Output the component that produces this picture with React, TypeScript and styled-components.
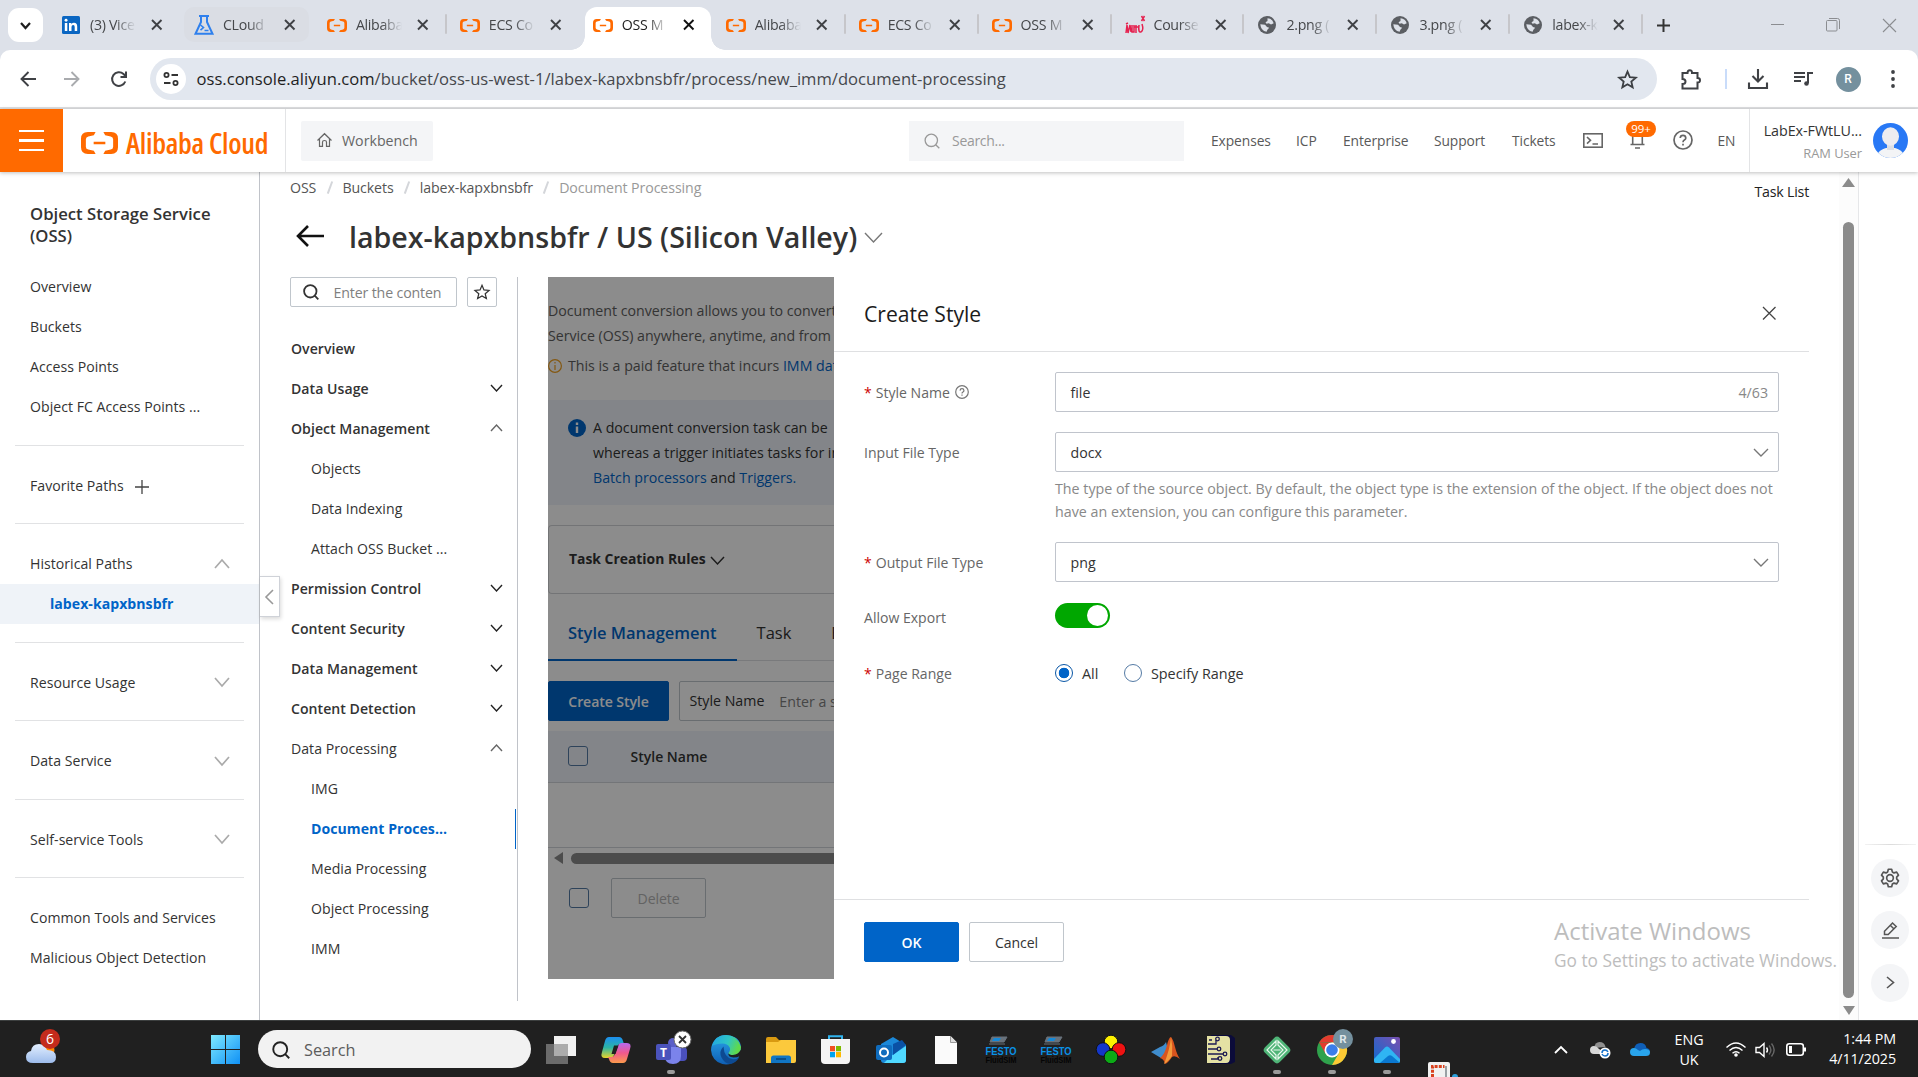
import React from 'react';
import styled, { createGlobalStyle, css } from 'styled-components';

const Global = createGlobalStyle`
  * { box-sizing: border-box; }
  html, body { margin: 0; padding: 0; overflow: hidden; background: #fff; }
  body { font-family: 'Open Sans', 'Noto Sans', sans-serif; font-size: 14.2px; color: #333; }
  svg { display: block; flex: none; overflow: visible; }
`;

const Screen = styled.div`
  position: relative;
  width: 1918px;
  height: 1077px;
  display: flex;
  flex-direction: column;
  overflow: hidden;
`;

/* ---------- browser tabs ---------- */
const TabStrip = styled.div`
  display: flex;
  height: 50px;
  flex: none;
  background: #dde1e9;
`;
const TabSearch = styled.div`
  width: 35px;
  height: 34px;
  margin: 8px 4px 0 8px;
  border-radius: 11px;
  background: #fff;
  display: flex;
  align-items: center;
  justify-content: center;
`;
const TabItem = styled.div<{ $active?: boolean; $hover?: boolean; $sep?: boolean }>`
  position: relative;
  width: 132.95px;
  height: 50px;
  padding: 0 7px 0 14px;
  display: flex;
  align-items: center;
  ${(p) => p.$sep && css`
    &::after { content: ''; position: absolute; right: -1px; top: 14px; width: 2px; height: 20px; background: #c6c6ca; border-radius: 1px; }
  `}
  ${(p) => p.$hover && css`
    &::before { content: ''; position: absolute; left: 4px; right: 4px; top: 7px; height: 35px; border-radius: 10px; background: #dadde4; z-index: 0; }
  `}
  ${(p) => p.$active && css`
    &::before { content: ''; position: absolute; left: 6px; right: 1px; top: 7px; bottom: 0; border-radius: 12px 12px 0 0; background: #fff; }
  `}
`;
const Flare = styled.span<{ $right?: boolean }>`
  position: absolute;
  bottom: 0;
  width: 14px;
  height: 14px;
  ${(p) => (p.$right ? 'right: -13px;' : 'left: -8px;')}
  background: radial-gradient(circle at ${(p) => (p.$right ? '100%' : '0')} 0, transparent 13.5px, #fff 14px);
`;
const TabIcon = styled.span`
  position: relative;
  width: 20px;
  margin-right: 9px;
  display: flex;
  justify-content: center;
`;
const TabTitle = styled.span<{ $active?: boolean }>`
  position: relative;
  width: 46px;
  overflow: hidden;
  white-space: nowrap;
  font-size: 14.2px;
  line-height: 24px;
  letter-spacing: -0.3px;
  color: ${(p) => (p.$active ? '#1f1f1f' : '#45474a')};
  mask-image: linear-gradient(90deg, #000 55%, transparent 100%);
`;
const TabClose = styled.span`
  position: relative;
  margin-left: 16px;
`;
const NewTab = styled.div`
  width: 42px;
  display: flex;
  align-items: center;
  justify-content: center;
`;
const WindowButtons = styled.div`
  margin-left: auto;
  display: flex;
  align-items: center;
  & > span { width: 57px; display: flex; justify-content: center; }
  & > span:first-child { margin-right: -1px; padding-left: 2px; }
`;

/* ---------- address bar ---------- */
const ToolbarBack = styled.div`
  background: #dde1e9;
  flex: none;
`;
const AddressRow = styled.div`
  height: 59px;
  display: flex;
  align-items: flex-start;
  padding-top: 8px;
  background: #fff;
  border-radius: 10px 10px 0 0;
  border-bottom: 2px solid #dedfe1;
`;
const BarButton = styled.div<{ $w: number }>`
  width: ${(p) => p.$w}px;
  height: 42px;
  display: flex;
  align-items: center;
  justify-content: center;
`;
const Omnibox = styled.div`
  width: 1507px;
  height: 42px;
  border-radius: 21px;
  background: #e2e7ef;
  display: flex;
  align-items: center;
  padding: 0 20px 0 6px;
`;
const SiteInfo = styled.span`
  width: 30px;
  height: 30px;
  border-radius: 50%;
  background: #fff;
  display: flex;
  align-items: center;
  justify-content: center;
  margin-right: 10.5px;
`;
const Url = styled.span`
  flex: 1;
  font-size: 16.6px;
  line-height: 26px;
  letter-spacing: 0.005px;
  color: #46484c;
  b { font-weight: 400; color: #1f1f1f; }
`;
const BarDivider = styled.i`
  width: 2px;
  height: 20px;
  margin-top: 11px;
  background: #c9dcfa;
`;
const ProfileDot = styled.span`
  width: 25px;
  height: 25px;
  border-radius: 50%;
  background: #74909e;
  color: #fff;
  font: 500 12px/25px Roboto, sans-serif;
  text-align: center;
`;

/* ---------- console header ---------- */
const Header = styled.header`
  position: relative;
  z-index: 3;
  height: 63px;
  flex: none;
  display: flex;
  align-items: center;
  background: #fff;
  box-shadow: 0 1px 4px rgba(0, 0, 0, 0.25);
`;
const Burger = styled.div`
  width: 63px;
  height: 63px;
  background: #ff6a00;
  display: flex;
  flex-direction: column;
  align-items: center;
  justify-content: center;
  gap: 7px;
  i { width: 25px; height: 2.5px; background: #fff; }
`;
const Brand = styled.div`
  width: 223px;
  height: 63px;
  border-right: 1px solid #e3e4e6;
  padding: 4px 0 0 18px;
  display: flex;
  align-items: center;
  gap: 8px;
  color: #ff6a00;
  font: 600 28.8px/40px 'Open Sans', sans-serif;
  font-stretch: 75%;
  letter-spacing: -0.25px;
  white-space: nowrap;
`;
const Workbench = styled.div`
  width: 132px;
  height: 40px;
  margin-left: 15px;
  padding: 0 0 1px 16px;
  display: flex;
  align-items: center;
  gap: 10px;
  border-radius: 2px;
  background: #f4f5f7;
  color: #666;
`;
const HeaderSearch = styled.div`
  width: 275px;
  height: 40px;
  margin-left: 476px;
  padding-left: 15px;
  display: flex;
  align-items: center;
  gap: 12px;
  background: #f4f5f7;
  color: #999;
  font-size: 14px;
  letter-spacing: -0.3px;
`;
const HeaderNav = styled.nav`
  display: flex;
  align-items: center;
  margin-left: 27px;
  color: #595959;
  font-size: 13.8px;
  letter-spacing: -0.08px;
`;
const NavCell = styled.span<{ $w: number }>`
  position: relative;
  width: ${(p) => p.$w}px;
  white-space: nowrap;
  padding-bottom: 1px;
`;
const CountBadge = styled.span`
  position: absolute;
  left: -4px;
  top: -10px;
  width: 30px;
  height: 16px;
  border-radius: 8px;
  background: #ff6a00;
  color: #fff;
  font-size: 11.5px;
  line-height: 16px;
  text-align: center;
`;
const Account = styled.div`
  height: 63px;
  flex: 1;
  border-left: 1px solid #e3e4e6;
  display: flex;
  align-items: center;
  justify-content: flex-end;
  padding-right: 10px;
  gap: 11px;
`;
const AccountText = styled.div`
  text-align: right;
  line-height: 23px;
  padding-top: 2px;
  font-size: 14.3px;
  letter-spacing: -0.05px;
  color: #333;
  small { display: block; font-size: 12.9px; color: #999; }
`;

/* ---------- console body ---------- */
const Body = styled.div`
  height: 848px;
  flex: none;
  display: flex;
`;
const Sidebar = styled.aside`
  width: 260px;
  padding-top: 31px;
  border-right: 1px solid #c0c3c9;
  font-size: 14.1px;
`;
const ServiceTitle = styled.h2`
  margin: 0 0 20.4px;
  padding-left: 30px;
  font-size: 16.7px;
  line-height: 22px;
  font-weight: 600;
`;
const SideItem = styled.div<{ $active?: boolean }>`
  height: 40px;
  padding: 0 30px 1px;
  display: flex;
  align-items: center;
  white-space: nowrap;
  letter-spacing: 0.03px;
  ${(p) => p.$active && css`
    padding-left: 50px;
    background: #eff3f8;
    color: #0064c8;
    font-weight: 700;
  `}
  svg { margin-left: auto; }
`;
const PlusMark = styled.span`
  margin: 3px 0 0 11px;
`;
const SideRule = styled.hr`
  width: 229px;
  height: 1px;
  margin: 17.5px 0 20px 15px;
  border: 0;
  background: #e1e2e4;
`;
const Main = styled.main`
  position: relative;
  width: 1579px;
  padding: 5px 0 0 30px;
`;
const CollapseHandle = styled.div`
  position: absolute;
  left: 0;
  top: 404px;
  width: 20px;
  height: 41px;
  display: flex;
  align-items: center;
  justify-content: center;
  background: #fff;
  border: 1px solid #cfd2d8;
  border-left: 0;
  box-shadow: 1px 2px 4px rgba(0, 0, 0, 0.15);
`;
const TopLine = styled.div`
  height: 20px;
  display: flex;
  align-items: center;
  padding-right: 30px;
  color: #555;
  white-space: nowrap;
`;
const Crumb = styled.span<{ $last?: boolean }>`
  color: ${(p) => (p.$last ? '#999' : '#555')};
  letter-spacing: -0.1px;
`;
const Slash = styled.i`
  width: 1.5px;
  height: 13px;
  margin: 0 12.3px;
  background: #d4d6da;
  transform: rotate(20deg);
`;
const TaskList = styled.span`
  margin: 8px 0 0 auto;
  color: #222;
  letter-spacing: -0.2px;
`;
const TitleRow = styled.div`
  height: 60px;
  margin-top: 10px;
  display: flex;
  align-items: center;
  padding-left: 6px;
  & > svg:first-child { margin-bottom: 2px; }
  h1 { margin: 0 8px 0 25px; font-size: 28.6px; line-height: 40px; font-weight: 600; color: #333; white-space: nowrap; }
`;
const Columns = styled.div`
  display: flex;
  margin-top: 10px;
`;
const BucketNav = styled.nav`
  width: 228px;
  height: 724px;
  border-right: 1px solid #c0c3c9;
`;
const FilterRow = styled.div`
  display: flex;
  gap: 10px;
  margin-bottom: 22px;
`;
const FilterInput = styled.div`
  width: 167px;
  height: 30px;
  padding: 0 15px 0 12px;
  display: flex;
  align-items: center;
  gap: 14.5px;
  border: 1px solid #c0c6cc;
  border-radius: 2px;
  color: #808080;
  letter-spacing: -0.15px;
  span { overflow: hidden; white-space: nowrap; }
`;
const StarButton = styled.div`
  width: 30px;
  height: 30px;
  display: flex;
  align-items: center;
  justify-content: center;
  border: 1px solid #c0c6cc;
  border-radius: 2px;
`;
const BucketItem = styled.div<{ $kind: string }>`
  height: 40px;
  padding: 0 15px 2px ${(p) => (p.$kind === 'child' || p.$kind === 'active' ? 21 : 1)}px;
  display: flex;
  align-items: center;
  white-space: nowrap;
  font-size: 14.1px;
  letter-spacing: 0.03px;
  font-weight: ${(p) => (p.$kind === 'group' ? 600 : p.$kind === 'active' ? 700 : 400)};
  ${(p) => p.$kind === 'active' && css`
    margin-right: 1px;
    border-right: 1px solid #0064c8;
    color: #0064c8;
  `}
  svg { margin-left: auto; }
`;

/* ---------- page below the mask ---------- */
const Masked = styled.section`
  position: relative;
  width: 286px;
  height: 702px;
  margin-left: 30px;
  padding-top: 21px;
  overflow: hidden;
  white-space: nowrap;
  color: #333;
  font-size: 14.2px;
  &::after { content: ''; position: absolute; inset: 0; background: rgba(0, 0, 0, 0.45); }
`;
const Intro = styled.p`
  margin: 0;
  line-height: 25px;
  letter-spacing: -0.02px;
  color: #606060;
`;
const Paid = styled.div`
  height: 30px;
  margin-top: 2px;
  display: flex;
  align-items: center;
  gap: 6px;
  color: #606060;
  svg { margin-top: 2px; }
`;
const Link = styled.span`
  color: #0064c8;
`;
const Notice = styled.div`
  height: 105px;
  margin-top: 20px;
  padding: 15px 0 0 20px;
  display: flex;
  gap: 7px;
  background: #eff3f9;
  line-height: 25px;
  svg { margin-top: 4px; }
`;
const Rules = styled.div`
  height: 69px;
  margin-top: 20px;
  padding: 0 0 2px 20px;
  display: flex;
  align-items: center;
  gap: 5px;
  border: 1px solid #d2d4d8;
  border-right: 0;
  border-radius: 4px 0 0 4px;
  font-weight: 700;
  font-size: 13.9px;
  svg { margin-top: 3px; }
`;
const PageTabs = styled.div`
  height: 56px;
  margin-top: 11px;
  display: flex;
  border-bottom: 1px solid #dcdee2;
  font-size: 16.5px;
  line-height: 56px;
`;
const PageTab = styled.div<{ $active?: boolean }>`
  height: 56px;
  padding: 0 20px;
  ${(p) => p.$active && css`
    width: 189px;
    border-bottom: 2px solid #0064c8;
    color: #0064c8;
    font-weight: 600;
  `}
`;
const Actions = styled.div`
  display: flex;
  gap: 10px;
  margin-top: 20px;
`;
const Button = styled.div<{ $primary?: boolean; $ghost?: boolean; $w: number }>`
  width: ${(p) => p.$w}px;
  height: 40px;
  flex: none;
  display: flex;
  align-items: center;
  justify-content: center;
  border-radius: 2px;
  border: 1px solid ${(p) => (p.$primary ? '#0064c8' : '#c0c6cc')};
  background: ${(p) => (p.$primary ? '#0064c8' : '#fff')};
  color: ${(p) => (p.$primary ? '#fff' : p.$ghost ? '#b4b4b4' : '#333')};
  font-size: 14.1px;
  letter-spacing: -0.1px;
  font-weight: ${(p) => (p.$primary ? 600 : 500)};
`;
const StyleSearch = styled.div`
  width: 300px;
  height: 40px;
  flex: none;
  padding: 0 0 1px 9.5px;
  display: flex;
  align-items: center;
  gap: 15px;
  border: 1px solid #c0c6cc;
  border-radius: 2px;
  em { font-style: normal; color: #808080; padding-top: 1px; }
`;
const TableHead = styled.div`
  height: 52px;
  margin-top: 10px;
  padding-left: 20px;
  display: flex;
  align-items: center;
  gap: 42.5px;
  background: #eff3f9;
  border-bottom: 1px solid #d2d5da;
  font-weight: 600;
  font-size: 14px;
  span { margin-bottom: 2px; }
`;
const TableRow = styled.div`
  height: 65px;
  border-bottom: 1px solid #d2d5da;
`;
const Check = styled.span`
  width: 20px;
  height: 20px;
  flex: none;
  border: 1px solid #557ba5;
  border-radius: 3px;
`;
const HScroll = styled.div`
  height: 20px;
  display: flex;
  align-items: center;
  padding-left: 6px;
  gap: 8px;
  i { flex: 1; height: 11px; border-radius: 6px 0 0 6px; background: #8b8b8b; }
`;
const BulkRow = styled.div`
  margin-top: 10px;
  padding-left: 21px;
  display: flex;
  align-items: center;
  gap: 22px;
`;

/* ---------- drawer ---------- */
const Drawer = styled.section`
  width: 975px;
  height: 702px;
  display: flex;
  flex-direction: column;
  background: #fff;
`;
const DrawerHead = styled.div`
  height: 75px;
  padding: 0 34px 1px 30px;
  display: flex;
  align-items: center;
  justify-content: space-between;
  border-bottom: 1px solid #dfe0e2;
  font-size: 21.1px;
  color: #1c1c1c;
`;
const Form = styled.div`
  flex: 1;
  padding: 20px 30px 0;
`;
const Field = styled.div<{ $gap?: number }>`
  display: flex;
  margin-bottom: ${(p) => p.$gap ?? 20}px;
`;
const Label = styled.div`
  width: 191px;
  height: 40px;
  display: flex;
  align-items: center;
  color: #666;
  font-size: 14.05px;
  b { font-weight: 400; color: #c00; margin-right: 4px; }
  svg { margin-left: 5.5px; }
`;
const Control = styled.div`
  width: 724px;
`;
const Box = styled.div`
  height: 40px;
  padding: 0 10px 0 14.5px;
  display: flex;
  align-items: center;
  justify-content: space-between;
  border: 1px solid #c0c4cc;
  border-radius: 2px;
  color: #333;
  em { font-style: normal; color: #888; font-size: 14.2px; }
`;
const Hint = styled.p`
  margin: 5px 0 0;
  line-height: 23px;
  font-size: 14.28px;
  color: #888;
  white-space: nowrap;
`;
const Toggle = styled.div`
  width: 55px;
  height: 25px;
  margin-bottom: 3px;
  padding: 2px;
  border-radius: 13px;
  background: #00a700;
  display: flex;
  justify-content: flex-end;
  i { width: 21px; height: 21px; border-radius: 50%; background: #fff; }
`;
const Radio = styled.span<{ $on?: boolean }>`
  width: 18px;
  height: 18px;
  border-radius: 50%;
  border: 1px solid ${(p) => (p.$on ? '#0a57a6' : '#557ba5')};
  background: ${(p) => (p.$on ? 'radial-gradient(circle, #0064c8 5px, #fff 5.6px)' : '#fff')};
`;
const RadioRow = styled.div`
  height: 40px;
  display: flex;
  align-items: center;
  gap: 9px;
  font-size: 14.4px;
  span + em { font-style: normal; margin-right: 16.5px; }
`;
const DrawerFoot = styled.div`
  height: 80px;
  padding: 22px 30px 0;
  display: flex;
  gap: 10px;
  border-top: 1px solid #dfe0e2;
`;

/* ---------- right edge ---------- */
const ScrollTrack = styled.div`
  width: 19px;
  padding-top: 6px;
  display: flex;
  flex-direction: column;
  align-items: center;
  background: #fcfcfc;
`;
const ScrollThumb = styled.i`
  width: 11px;
  height: 776px;
  margin: 35px 0 8px;
  border-radius: 6px;
  background: #8b8b8b;
`;
const Rail = styled.aside`
  width: 60px;
  border-left: 1px solid #e6e7e9;
  display: flex;
  flex-direction: column;
  align-items: center;
  padding: 672px 0 0 3px;
  gap: 14.6px;
  hr { width: 51px; height: 1px; margin: 0 0 -1px; border: 0; background: linear-gradient(90deg, #f2f2f2, #dcdcdc, #f2f2f2); }
`;
const RailButton = styled.div`
  width: 38px;
  height: 38px;
  border-radius: 50%;
  background: #f4f5f7;
  display: flex;
  align-items: center;
  justify-content: center;
`;
const Watermark = styled.div`
  position: absolute;
  left: 1554px;
  top: 914px;
  z-index: 4;
  color: #bdbdbd;
  font-size: 24px;
  line-height: 34px;
  white-space: nowrap;
  small { display: block; font-size: 17.3px; line-height: 26px; }
`;

/* ---------- taskbar ---------- */
const Taskbar = styled.footer`
  height: 57px;
  flex: none;
  display: flex;
  align-items: center;
  background: #202020;
  border-top: 1px solid #3c3f3f;
  color: #fff;
`;
const WeatherCell = styled.div`
  width: 211px;
  padding-left: 25px;
`;
const TaskSearch = styled.div`
  width: 273px;
  height: 38px;
  margin: 3px 2px 3px 18px;
  padding: 1px 0 0 14px;
  display: flex;
  align-items: center;
  gap: 14px;
  border-radius: 19px;
  background: #f2f2f2;
  color: #5c5c5c;
  font-size: 16.3px;
`;
const AppCell = styled.div<{ $running?: boolean }>`
  position: relative;
  width: 55.08px;
  height: 56px;
  padding-top: 1px;
  display: flex;
  align-items: center;
  justify-content: center;
  ${(p) => p.$running && css`
    &::after { content: ''; position: absolute; left: 24px; bottom: 3px; width: 8px; height: 4px; border-radius: 2px; background: #9a9a9a; }
  `}
`;
const Snip = styled.div`
  width: 50px;
  height: 56px;
  display: flex;
  align-items: flex-end;
  justify-content: center;
  overflow: hidden;
`;
const Tray = styled.div`
  margin-left: auto;
  padding-right: 22px;
  height: 56px;
  display: flex;
  align-items: center;
`;
const TrayCell = styled.div<{ $w: number }>`
  width: ${(p) => p.$w}px;
  display: flex;
  justify-content: center;
  text-align: center;
  font-size: 14.3px;
  line-height: 20px;
  padding-top: 1px;
`;
const Clock = styled.div`
  width: 84px;
  font-size: 14.3px;
  letter-spacing: -0.1px;
  line-height: 20px;
  text-align: right;
`;

/* ---------- drawings ---------- */
type ChevProps = { w?: number; h?: number; color?: string; up?: boolean; sw?: number };
const Chev = ({ w = 14, h = 7, color = '#333', up, sw = 1.4 }: ChevProps) => (
  <svg width={w} height={h} fill="none" stroke={color} strokeWidth={sw}>
    <path d={up ? `M0 ${h}L${w / 2} 0L${w} ${h}` : `M0 0L${w / 2} ${h}L${w} 0`} />
  </svg>
);
const Cross = ({ s = 10, color = '#3c3c3c', sw = 2 }: { s?: number; color?: string; sw?: number }) => (
  <svg width={s} height={s} stroke={color} strokeWidth={sw}><path d={`M0 0L${s} ${s}M${s} 0L0 ${s}`} /></svg>
);
const Lens = ({ s = 16, color = '#333', sw = 1.6 }: { s?: number; color?: string; sw?: number }) => (
  <svg width={s} height={s} viewBox="0 0 16 16" fill="none" stroke={color} strokeWidth={sw}>
    <circle cx="7.3" cy="7.3" r="6.2" /><path d="M11.7 11.7L15.3 15.3" />
  </svg>
);
const AliMark = ({ w = 20, h = 13 }: { w?: number; h?: number }) => (
  <svg width={w} height={h} viewBox="0 0 38 23" fill="#ff6a00" preserveAspectRatio="none">
    <path d="M15 0H7Q0 0 0 7v9q0 7 7 7h8l-1.800-3.300-5.700-1.300Q5 18 5 15.500v-8Q5 5 7.500 4.600L13.200 3.300zM23 0h8q7 0 7 7v9q0 7-7 7h-8l1.800-3.300 5.700-1.300Q33 18 33 15.500v-8Q33 5 30.500 4.600L24.800 3.300zM13 10.300h12v2.500H13z" />
  </svg>
);
const LinkedIn = () => (
  <svg width="18" height="18"><rect width="18" height="18" rx="1.500" fill="#0a66c2" /><path d="M2.800 7h2.500v8H2.800zM7 7h2.400v1.200Q10.300 6.800 12 6.800q3.200 0 3.200 3.700V15h-2.500v-4q0-2-1.500-2-1.700 0-1.700 2v4H7z" fill="#fff" /><circle cx="4.050" cy="4.200" r="1.450" fill="#fff" /></svg>
);
const Flask = () => (
  <svg width="20" height="20" fill="none" stroke="#2f80ed" strokeWidth="2"><path d="M5 1h10M7 1v6L1.500 18.800h17L13 7V1" /><path d="M6.500 10l3 2.500-3 2.700M10.500 15.500h4" strokeWidth="1.600" /></svg>
);
const Globe = () => (
  <svg width="18" height="18">
    <circle cx="9" cy="9" r="9" fill="#5b5e63" />
    <path d="M9.500 2.200q5 .4 6.200 5l-2.700 1.300-2.200-1.200-2.300.5-1-1.600 2-1.200zM2.300 8.200l4.700.6 2 2.200 2.200.8-1.800 2-.8 2q-5.800-1-6.300-7.600z" fill="#dde1e9" />
  </svg>
);
const RedScript = () => (
  <svg width="20" height="20" fill="none" stroke="#e5214f" strokeWidth="1.500"><path d="M1 18l1-8 1 8 2-8 1 7M7 10v7h2v-7M11 10v8M9.500 12h4M14 10q-1 8 2 7 3-2 1-8M16.500 1l3 5M19.500 1l-3 5M1 9l2-1" /></svg>
);
const Star = ({ s = 18, color = '#3c3f43', sw = 1.7 }: { s?: number; color?: string; sw?: number }) => (
  <svg width={s} height={s} viewBox="0 0 18 18" fill="none" stroke={color} strokeWidth={sw}><path d="M9 1.500l2.200 5.200 5.700.5-4.300 3.700 1.300 5.500L9 13.500l-4.900 2.900 1.300-5.500L1.100 7.200l5.700-.5z" /></svg>
);
const HelpRing = ({ s = 14, color = '#777', sw = 1.2 }: { s?: number; color?: string; sw?: number }) => (
  <svg width={s} height={s} viewBox="0 0 20 20" fill="none" stroke={color} strokeWidth={(sw * 20) / s}>
    <circle cx="10" cy="10" r="9" /><path d="M7.200 8q.2-2.700 2.800-2.700T12.800 8q0 1.300-1.400 2.100T10 12.200M10 13.700v1.800" />
  </svg>
);

const Weather = () => (
  <svg width="34" height="34" viewBox="0 0 34 34">
    <defs><linearGradient id="cl" x1="0" y1="0" x2="0" y2="1"><stop offset="0" stopColor="#e3efff" /><stop offset="1" stopColor="#9dbcec" /></linearGradient></defs>
    <circle cx="24" cy="18" r="5.500" fill="#ff8a00" />
    <path d="M8 31q-7 0-7-6 0-5 5-6 1-7 8-7 6 0 8 6 9 0 9 7 0 6-6 6z" fill="url(#cl)" />
    <circle cx="25" cy="7" r="10" fill="#c42b1c" />
    <text x="25" y="12" fontSize="14" fill="#fff" textAnchor="middle" fontFamily="Open Sans">6</text>
  </svg>
);
const Windows = () => (
  <svg width="29" height="29"><defs><linearGradient id="wn" x1="0" y1="0" x2="1" y2="1"><stop offset="0" stopColor="#7feaff" /><stop offset="1" stopColor="#0f90f5" /></linearGradient></defs><path d="M0 0h14v14H0zM15 0h14v14H15zM0 15h14v14H0zM15 15h14v14H15z" fill="url(#wn)" /></svg>
);
const TaskView = () => (
  <svg width="30" height="28"><rect x="8" y="0" width="22" height="20" fill="#f1f1f1" /><rect x="0" y="8" width="22" height="20" fill="#6b6b6b" /><path d="M8 8h14v12H8z" fill="#acacac" /></svg>
);
const Copilot = () => (
  <svg width="30" height="27" viewBox="0 0 30 27">
    <defs>
      <linearGradient id="c1" x1="0" y1="0" x2="0" y2="1"><stop offset="0" stopColor="#1c8ef0" /><stop offset=".5" stopColor="#2cb4a5" /><stop offset="1" stopColor="#e9d32a" /></linearGradient>
      <linearGradient id="c2" x1="0" y1="0" x2="0" y2="1"><stop offset="0" stopColor="#b869f0" /><stop offset=".5" stopColor="#f0588d" /><stop offset="1" stopColor="#fb9a4b" /></linearGradient>
    </defs>
    <path d="M8 1h10q3 0 4 4l1 3h-4q-2 0-3 3l-3 8q-1 3-4 3H4q-5 0-3-6L4 5q1-4 4-4z" fill="url(#c1)" />
    <path d="M22 27H12q-3 0-4-4l-1-2h4q2 0 3-3l3-8q1-3 4-3h5q5 0 3 6l-3 10q-1 4-4 4z" fill="url(#c2)" />
    <path d="M13 9.500h4.500l-3 8.500h-4z" fill="#202020" />
  </svg>
);
const Teams = () => (
  <svg width="32" height="36" viewBox="0 0 32 36">
    <circle cx="18" cy="11" r="5" fill="#5b5fc7" /><rect x="20" y="15" width="12" height="14" rx="4" fill="#4a50bd" />
    <path d="M10 15h16v9q0 8-8 8t-8-8z" fill="#7b83eb" />
    <rect x="1" y="12" width="15" height="16" rx="2" fill="#4b53bc" /><text x="8.500" y="24.500" fontSize="12" fontWeight="700" fill="#fff" textAnchor="middle" fontFamily="Open Sans">T</text>
    <circle cx="27.500" cy="7.500" r="8.500" fill="#fff" stroke="#6a6a6a" /><path d="M24 4l7 7M31 4l-7 7" stroke="#333" strokeWidth="1.800" />
  </svg>
);
const Edge = () => (
  <svg width="30" height="30" viewBox="0 0 30 30">
    <defs>
      <linearGradient id="e1" x1="0" y1="0" x2="1" y2=".3"><stop offset="0" stopColor="#1fa3e8" /><stop offset=".6" stopColor="#2fc6c4" /><stop offset="1" stopColor="#5fd94c" /></linearGradient>
      <linearGradient id="e2" x1="0" y1="0" x2="0" y2="1"><stop offset="0" stopColor="#2aa5ea" /><stop offset="1" stopColor="#0f5fb4" /></linearGradient>
    </defs>
    <path d="M0 15A15 15 0 0 1 15 0q14 1 15 12 0 4-2 6.500 1 1 0 3.500A15 15 0 0 1 0 15z" fill="url(#e2)" />
    <path d="M1 11Q4 0 15 0t15 12q0 8-8 8-5 0-4.500-2 2.500-3 1-6-2-3.500-7-3.500-7 0-10.500 2.500z" fill="url(#e1)" />
    <path d="M12.500 11.500q-5 5-2 11 3 6 9 6.500 5-1 8.500-6-2.500 1.300-6 1.300-9-1.300-9.500-12.800z" fill="#0d4a92" />
    <path d="M17.500 18q-1 4 5 4.500 4 0 6.500-1.500l2-4-1.500-2q-2 4.500-7.500 5-4 0-4.500-2z" fill="#202020" />
  </svg>
);
const Folder = () => (
  <svg width="30" height="27"><path d="M0 3q0-2 2-2h8l3 3h13q2 0 2 2v5H0z" fill="#d99a11" /><path d="M0 6h12l3-2h15v21q0 2-2 2H0z" fill="#fcc93c" /><path d="M5 27v-5q0-2.500 2.500-2.500h15Q25 19.500 25 22v5z" fill="#1176c4" /><path d="M10 23h10" stroke="#0a4f8b" strokeWidth="2" /></svg>
);
const Store = () => (
  <svg width="29" height="29"><path d="M8 5V1.200h13V5" fill="none" stroke="#30b4ee" strokeWidth="2" /><path d="M0 4h29v21q0 4-4 4H4q-4 0-4-4z" fill="#f4f4f4" /><path d="M9 11h5v5.300H9z" fill="#f25022" /><path d="M15 11h5v5.300h-5z" fill="#7fba00" /><path d="M9 17h5v5.300H9z" fill="#00a4ef" /><path d="M15 17h5v5.300h-5z" fill="#ffb900" /></svg>
);
const Outlook = () => (
  <svg width="30" height="28"><path d="M5 8L17 1l13 8v15q0 3-3 3H8q-3 0-3-3z" fill="#1b88d8" /><path d="M15 20L30 10v14q0 3-3 3H8z" fill="#50d9ff" /><path d="M17 8l9-4 4 5-13 10z" fill="#0a51a5" /><rect x="0" y="9" width="16" height="15" rx="2" fill="#0f6cbd" /><circle cx="8" cy="16.500" r="4" fill="none" stroke="#fff" strokeWidth="2" /></svg>
);
const Doc = () => (
  <svg width="22" height="28"><path d="M0 0h15.500L22 6.500V28H0z" fill="#fafafa" /><path d="M15.500 0v6.500H22" fill="#ddd" stroke="#999" /></svg>
);
const Festo = () => (
  <svg width="32" height="28"><path d="M7 1h15l-3 5H5zM4 8h16" fill="#68727c" stroke="#68727c" /><path d="M9 2h7l-2 3H7z" fill="#1688d6" /><text x="16" y="18.500" fontSize="10" fontWeight="800" fill="#0a91e6" textAnchor="middle" textLength="31" lengthAdjust="spacingAndGlyphs" fontFamily="Liberation Sans">FESTO</text><text x="16" y="27" fontSize="9" fontWeight="700" fill="#050505" textAnchor="middle" textLength="31" lengthAdjust="spacingAndGlyphs" fontFamily="Liberation Sans">FluidSIM</text></svg>
);
const Balls = () => (
  <svg width="30" height="29" stroke="#111"><circle cx="15" cy="7" r="6.800" fill="#fdf000" /><circle cx="7" cy="14.500" r="6.800" fill="#1437c8" /><circle cx="23" cy="14.500" r="6.800" fill="#ee1212" /><circle cx="15" cy="22" r="6.800" fill="#0caa16" /></svg>
);
const Matlab = () => (
  <svg width="30" height="28"><path d="M0 16l9-5q4-1 6-5l2 8-7 8z" fill="#3f8ccc" /><path d="M9 22q5-4 7-13 2-8 4-8 2 2 4 10 2 8 5 12-5-4-8-2-4 6-7 7-1-5-5-6z" fill="#d9541e" /><path d="M20 1q-1 12-7 27 4-2 8-8 1-10-1-19z" fill="#f39a3b" /></svg>
);
const Circuit = () => (
  <svg width="28" height="29"><path d="M4 0h20l4 3v24l-4 2H4z" fill="#0b0b3a" /><path d="M0 1h19q4 0 4 4v18q0 5-4 5H0z" fill="#e4e1a4" /><g fill="none" stroke="#1d1a52" strokeWidth="1.300"><path d="M1 9h8V5M1 14h9M1 19h15M4 24h7v-2M2 5h3" /><circle cx="10.500" cy="4" r="1.800" /><circle cx="12" cy="14" r="1.800" /><circle cx="18" cy="19" r="1.800" /><circle cx="13" cy="23.500" r="1.800" /></g></svg>
);
const GreenDiamond = () => (
  <svg width="30" height="30"><rect x="4.500" y="4.500" width="21" height="21" rx="4" transform="rotate(45 15 15)" fill="#4fb477" /><g fill="none" stroke="#e6f7ec" strokeWidth="1.200"><path d="M14 6L5 15l9 9v-4l-5-5 5-5zM16 6l9 9-9 9v-4l5-5-5-5zM11.500 15h7" /></g></svg>
);
const Chrome = () => (
  <svg width="30" height="30" viewBox="0 0 30 30"><circle cx="15" cy="15" r="15" fill="#2fa24c" /><path d="M2 7.500A15 15 0 0 1 28 7.500H15z" fill="#e33b2e" /><path d="M2 7.500L8.500 18.700 15 8z" fill="#e33b2e" /><path d="M28 7.500A15 15 0 0 1 15 30L21.500 18.700 15 7.500z" fill="#fcc934" /><circle cx="15" cy="15" r="7.500" fill="#fff" /><circle cx="15" cy="15" r="5.800" fill="#3b7de9" /><circle cx="26" cy="4" r="10" fill="#74909e" /><text x="26" y="8" fontSize="11.500" fontWeight="700" textAnchor="middle" fill="#dfe6ea" fontFamily="Roboto">R</text></svg>
);
const Photos = () => (
  <svg width="26" height="26"><defs><linearGradient id="ph" x1="0" y1="1" x2="1" y2="0"><stop offset="0" stopColor="#0f6bd0" /><stop offset="1" stopColor="#7a4fb0" /></linearGradient></defs><rect width="26" height="26" rx="2" fill="url(#ph)" /><path d="M0 22L11 10.500q2-2 4 0L26 22v2q0 2-2 2H2q-2 0-2-2z" fill="#2fb5f3" /><path d="M6 26l8-7q2-1.500 4 0l7.500 6.500L24 26z" fill="#0a78d0" /><circle cx="19.500" cy="4.500" r="2.400" fill="#fff" /></svg>
);
const SnipArt = () => (
  <svg width="22" height="15"><rect x="0" y="0" width="22" height="18" rx="2" fill="#f1f1f1" /><path d="M4.500 15V4.500h12" fill="none" stroke="#d9411e" strokeWidth="3" strokeDasharray="3 1.200" /><path d="M17 4h2v11h-2z" fill="#9aa0a4" /><circle cx="27" cy="15" r="3" fill="#2ba0dc" /></svg>
);
const Cloud = ({ top, low, w = 20 }: { top: string; low: string; w?: number }) => (
  <svg width={w} height={(w * 13) / 20} viewBox="0 0 20 13"><path d="M4 6Q5 0 10.500 0q5 0 6 5 3.500.5 3.500 4L10 10z" fill={top} /><path d="M4 13q-4 0-4-4t4-4q2 0 4 2l2 1q2-2 5-2 5 0 5 3.500T16 13z" fill={low} /></svg>
);

/* ---------- data ---------- */
const tabs = [
  { t: '(3) Vice', i: <LinkedIn /> },
  { t: 'CLoud', i: <Flask />, hover: true },
  { t: 'Alibaba', i: <AliMark />, sep: true },
  { t: 'ECS Co', i: <AliMark /> },
  { t: 'OSS M', i: <AliMark />, active: true },
  { t: 'Alibaba', i: <AliMark />, sep: true },
  { t: 'ECS Co', i: <AliMark />, sep: true },
  { t: 'OSS M', i: <AliMark />, sep: true },
  { t: 'Course', i: <RedScript />, sep: true },
  { t: '2.png (', i: <Globe />, sep: true },
  { t: '3.png (', i: <Globe />, sep: true },
  { t: 'labex-k', i: <Globe />, sep: true },
];
const bucketMenu: [string, string, string?][] = [
  ['Overview', 'group'],
  ['Data Usage', 'group', 'down'],
  ['Object Management', 'group', 'up'],
  ['Objects', 'child'],
  ['Data Indexing', 'child'],
  ['Attach OSS Bucket ...', 'child'],
  ['Permission Control', 'group', 'down'],
  ['Content Security', 'group', 'down'],
  ['Data Management', 'group', 'down'],
  ['Content Detection', 'group', 'down'],
  ['Data Processing', 'open', 'up'],
  ['IMG', 'child'],
  ['Document Proces...', 'active'],
  ['Media Processing', 'child'],
  ['Object Processing', 'child'],
  ['IMM', 'child'],
];
const apps: [React.ReactNode, boolean?][] = [
  [<TaskView />], [<Copilot />], [<Teams />, true], [<Edge />], [<Folder />], [<Store />], [<Outlook />], [<Doc />],
  [<Festo />], [<Festo />], [<Balls />], [<Matlab />], [<Circuit />], [<GreenDiamond />, true], [<Chrome />, true], [<Photos />, true],
];

const BrowserChrome = () => (
  <>
    <TabStrip>
      <TabSearch><Chev w={9} h={5} color="#1f1f1f" sw={2.2} /></TabSearch>
      {tabs.map((tab, n) => (
        <TabItem key={n} $active={tab.active} $hover={tab.hover} $sep={tab.sep}>
          {tab.active && <><Flare /><Flare $right /></>}
          <TabIcon>{tab.i}</TabIcon>
          <TabTitle $active={tab.active}>{tab.t}</TabTitle>
          <TabClose><Cross s={9.5} color={tab.active ? '#111' : '#3f4145'} sw={1.9} /></TabClose>
        </TabItem>
      ))}
      <NewTab><svg width="13" height="13" stroke="#333" strokeWidth="2"><path d="M6.500 0v13M0 6.500h13" /></svg></NewTab>
      <WindowButtons>
        <span><svg width="13" height="2"><path d="M0 0h13v1H0z" fill="#8b8d91" /></svg></span>
        <span><svg width="14" height="14" fill="none" stroke="#8b8d91"><rect x=".5" y="2.500" width="10.500" height="10.500" rx="1" /><path d="M3 .5h8.500q2 0 2 2V11" /></svg></span>
        <span><Cross s={13} color="#8b8d91" sw={1.1} /></span>
      </WindowButtons>
    </TabStrip>
    <ToolbarBack>
      <AddressRow>
        <BarButton $w={55}><svg width="16" height="16" fill="none" stroke="#3f4145" strokeWidth="1.900"><path d="M16 8H1.500M8.500 1L1.500 8l7 7" /></svg></BarButton>
        <BarButton $w={33}><svg width="16" height="16" fill="none" stroke="#a9abae" strokeWidth="1.900"><path d="M0 8h14.500M7.500 1l7 7-7 7" /></svg></BarButton>
        <BarButton $w={62}><svg width="16" height="16" fill="none" stroke="#3f4145" strokeWidth="2"><path d="M14.300 10.500A6.800 6.800 0 1 1 12.500 3L15 5.500M15 .5v5.500H9.500" /></svg></BarButton>
        <Omnibox>
          <SiteInfo><svg width="16" height="14" fill="none" stroke="#333" strokeWidth="1.800"><circle cx="3.500" cy="3" r="2.100" /><path d="M8.500 3H15M1 11h6.500" /><circle cx="12.500" cy="11" r="2.100" /></svg></SiteInfo>
          <Url><b>oss.console.aliyun.com</b>/bucket/oss-us-west-1/labex-kapxbnsbfr/process/new_imm/document-processing</Url>
          <Star s={19} />
        </Omnibox>
        <BarButton $w={68}><svg width="20" height="21" fill="none" stroke="#3f4145" strokeWidth="2"><path d="M1.500 4h5q0-2.800 2.300-2.800T11 4h5.500v5q2.500 0 2.500 2.300t-2.500 2.200v6h-15v-4.500q3 0 3-2.500t-3-2.500z" /></svg></BarButton>
        <BarDivider />
        <BarButton $w={62}><svg width="20" height="20" fill="none" stroke="#3f4145" strokeWidth="2.100"><path d="M10 0v12M4.500 7l5.500 5.500L15.500 7M1 13.500V19h18v-5.500" /></svg></BarButton>
        <BarButton $w={28}><svg width="19" height="16" fill="none" stroke="#3f4145" strokeWidth="2"><path d="M0 2h11M0 6h11M0 10h7M14 12V2h5" /><circle cx="12.500" cy="12.500" r="2.300" fill="#3f4145" stroke="none" /></svg></BarButton>
        <BarButton $w={62}><ProfileDot>R</ProfileDot></BarButton>
        <BarButton $w={28}><svg width="4" height="18" fill="#3f4145"><circle cx="2" cy="2" r="1.900" /><circle cx="2" cy="9" r="1.900" /><circle cx="2" cy="16" r="1.900" /></svg></BarButton>
      </AddressRow>
    </ToolbarBack>
  </>
);

const ConsoleHeader = () => (
  <Header>
    <Burger><i /><i /><i /></Burger>
    <Brand><AliMark w={37} h={22} />Alibaba Cloud</Brand>
    <Workbench>
      <svg width="15" height="14" fill="none" stroke="#666" strokeWidth="1.200"><path d="M.5 7.500l7-6.800 7 6.800M2.500 6v7.300h3V9q0-1.500 2-1.500t2 1.500v4.300h3V6" /></svg>
      Workbench
    </Workbench>
    <HeaderSearch><Lens s={16} color="#999" sw={1.3} />Search...</HeaderSearch>
    <HeaderNav>
      <NavCell $w={85}>Expenses</NavCell>
      <NavCell $w={47}>ICP</NavCell>
      <NavCell $w={91}>Enterprise</NavCell>
      <NavCell $w={78}>Support</NavCell>
      <NavCell $w={71}>Tickets</NavCell>
      <NavCell $w={47}><svg width="20" height="15" fill="none" stroke="#666" strokeWidth="1.600"><rect x=".8" y=".8" width="18.400" height="13.400" /><path d="M4 4l3.500 3.300L4 10.600M9.500 11h5.500" /></svg></NavCell>
      <NavCell $w={43}>
        <svg width="16" height="18" fill="none" stroke="#666" strokeWidth="1.600"><path d="M.5 13.500h14M2.700 13.500V6q0-4 4.800-4t4.800 4v7.500M5 17h5" /></svg>
        <CountBadge>99+</CountBadge>
      </NavCell>
      <NavCell $w={44.5}><HelpRing s={20} color="#666" sw={1.7} /></NavCell>
      <NavCell $w={31.5}>EN</NavCell>
    </HeaderNav>
    <Account>
      <AccountText>LabEx-FWtLU...<small>RAM User</small></AccountText>
      <svg width="35" height="35"><defs><clipPath id="av"><circle cx="17.500" cy="17.500" r="17.500" /></clipPath></defs><g clipPath="url(#av)"><rect width="35" height="35" fill="#2878f5" /><ellipse cx="17.500" cy="35" rx="14" ry="10.500" fill="#f3f4f6" /><path d="M14 20h7v7h-7z" fill="#dcdfe4" /><ellipse cx="17.500" cy="13.500" rx="8.500" ry="9.300" fill="#ececf0" /></g></svg>
    </Account>
  </Header>
);

const SideMenu = () => (
  <Sidebar>
    <ServiceTitle>Object Storage Service<br />(OSS)</ServiceTitle>
    <SideItem>Overview</SideItem>
    <SideItem>Buckets</SideItem>
    <SideItem>Access Points</SideItem>
    <SideItem>Object FC Access Points ...</SideItem>
    <SideRule />
    <SideItem>Favorite Paths<PlusMark><svg width="14" height="14" stroke="#444" strokeWidth="1.300"><path d="M7 0v14M0 7h14" /></svg></PlusMark></SideItem>
    <SideRule />
    <SideItem>Historical Paths<Chev up w={14} h={8} color="#aaa" sw={1.7} /></SideItem>
    <SideItem $active>labex-kapxbnsbfr</SideItem>
    <SideRule />
    <SideItem>Resource Usage<Chev w={14} h={8} color="#aaa" sw={1.7} /></SideItem>
    <SideRule />
    <SideItem>Data Service<Chev w={14} h={8} color="#aaa" sw={1.7} /></SideItem>
    <SideRule />
    <SideItem>Self-service Tools<Chev w={14} h={8} color="#aaa" sw={1.7} /></SideItem>
    <SideRule />
    <SideItem>Common Tools and Services</SideItem>
    <SideItem>Malicious Object Detection</SideItem>
  </Sidebar>
);

const UnderlyingPage = () => (
  <Masked>
    <Intro>Document conversion allows you to convert<br />Service (OSS) anywhere, anytime, and from</Intro>
    <Paid>
      <svg width="14" height="14" fill="none" stroke="#f0a020" strokeWidth="1.200"><circle cx="7" cy="7" r="6.400" /><path d="M7 6v5M7 3v1.500" /></svg>
      <span>This is a paid feature that incurs <Link>IMM data</Link></span>
    </Paid>
    <Notice>
      <svg width="18" height="18"><circle cx="9" cy="9" r="9" fill="#0064c8" /><path d="M9 7.500v6.500M9 3.500V6" stroke="#fff" strokeWidth="2.400" /></svg>
      <div>A document conversion task can be<br />whereas a trigger initiates tasks for in<br /><Link>Batch processors</Link> and <Link>Triggers.</Link></div>
    </Notice>
    <Rules>Task Creation Rules<Chev w={13} h={7} color="#333" sw={1.5} /></Rules>
    <PageTabs><PageTab $active>Style Management</PageTab><PageTab>Task</PageTab><PageTab>Event</PageTab></PageTabs>
    <Actions>
      <Button $primary $w={121}>Create Style</Button>
      <StyleSearch>Style Name<em>Enter a style name</em></StyleSearch>
    </Actions>
    <TableHead><Check />Style Name</TableHead>
    <TableRow />
    <HScroll><svg width="9" height="12"><path d="M9 0v12L0 6z" fill="#8b8b8b" /></svg><i /></HScroll>
    <BulkRow><Check /><Button $ghost $w={95}>Delete</Button></BulkRow>
  </Masked>
);

const CreateStyleDrawer = () => (
  <Drawer>
    <DrawerHead>Create Style<Cross s={12.5} color="#444" sw={1.3} /></DrawerHead>
    <Form>
      <Field>
        <Label><b>*</b>Style Name<HelpRing s={14} /></Label>
        <Control><Box>file<em>4/63</em></Box></Control>
      </Field>
      <Field $gap={19}>
        <Label>Input File Type</Label>
        <Control>
          <Box>docx<Chev w={14} h={7} color="#777" /></Box>
          <Hint>The type of the source object. By default, the object type is the extension of the object. If the object does not<br />have an extension, you can configure this parameter.</Hint>
        </Control>
      </Field>
      <Field $gap={15}>
        <Label><b>*</b>Output File Type</Label>
        <Control><Box>png<Chev w={14} h={7} color="#777" /></Box></Control>
      </Field>
      <Field $gap={16}>
        <Label>Allow Export</Label>
        <Control><RadioRow><Toggle><i /></Toggle></RadioRow></Control>
      </Field>
      <Field>
        <Label><b>*</b>Page Range</Label>
        <Control><RadioRow><Radio $on /><em>All</em><Radio /><em>Specify Range</em></RadioRow></Control>
      </Field>
    </Form>
    <DrawerFoot><Button $primary $w={95}>OK</Button><Button $w={95}>Cancel</Button></DrawerFoot>
  </Drawer>
);

const BucketPage = () => (
  <Main>
    <TopLine>
      <Crumb>OSS</Crumb><Slash /><Crumb>Buckets</Crumb><Slash /><Crumb>labex-kapxbnsbfr</Crumb><Slash /><Crumb $last>Document Processing</Crumb>
      <TaskList>Task List</TaskList>
    </TopLine>
    <TitleRow>
      <svg width="28" height="22" fill="none" stroke="#111" strokeWidth="2.600"><path d="M28 11H2M12 1L2 11l10 10" /></svg>
      <h1>labex-kapxbnsbfr / US (Silicon Valley)</h1>
      <Chev w={17} h={9} color="#777" />
    </TitleRow>
    <Columns>
      <BucketNav>
        <FilterRow>
          <FilterInput><Lens s={16} sw={1.8} /><span>Enter the content</span></FilterInput>
          <StarButton><Star s={16} color="#333" sw={1.4} /></StarButton>
        </FilterRow>
        {bucketMenu.map(([name, kind, dir]) => (
          <BucketItem key={name} $kind={kind}>
            {name}
            {dir && <Chev w={11} h={6} up={dir === 'up'} color={dir === 'up' ? '#666' : '#222'} />}
          </BucketItem>
        ))}
      </BucketNav>
      <UnderlyingPage />
      <CreateStyleDrawer />
    </Columns>
    <CollapseHandle><svg width="7" height="14" fill="none" stroke="#999" strokeWidth="1.600"><path d="M7 0L0 7l7 7" /></svg></CollapseHandle>
  </Main>
);

const RightEdge = () => (
  <>
    <ScrollTrack>
      <svg width="13" height="9"><path d="M6.500 0L13 9H0z" fill="#8b8b8b" /></svg>
      <ScrollThumb />
      <svg width="12" height="9"><path d="M0 0h12L6 9z" fill="#8b8b8b" /></svg>
    </ScrollTrack>
    <Rail>
      <hr />
      <RailButton><svg width="20" height="20" viewBox="0 0 24 24" fill="none" stroke="#555" strokeWidth="2"><path d="M10 1.500h4l.8 3.200 2 1.200L20 5l2.200 3.500L20 11v2l2.200 2.500L20 19l-3.200-.9-2 1.200-.8 3.200h-4l-.8-3.200-2-1.200L4 19l-2.200-3.500L4 13v-2L1.800 8.500 4 5l3.200.9 2-1.200z" strokeLinejoin="round" /><circle cx="12" cy="12" r="4" /></svg></RailButton>
      <RailButton><svg width="17" height="17" fill="none" stroke="#555" strokeWidth="1.500"><path d="M2.500 12.500V9.300L10.500 1l3.700 3.500-8 8zM8.300 3.300l3.700 3.700M0 16h17" /></svg></RailButton>
      <RailButton><svg width="7" height="11" fill="none" stroke="#555" strokeWidth="1.600"><path d="M0 0l6.500 5.500L0 11" /></svg></RailButton>
    </Rail>
  </>
);

const WinTaskbar = () => (
  <Taskbar>
    <WeatherCell><Weather /></WeatherCell>
    <Windows />
    <TaskSearch><Lens s={18} color="#222" sw={1.7} />Search</TaskSearch>
    {apps.map(([icon, running], n) => <AppCell key={n} $running={running}>{icon}</AppCell>)}
    <Snip><SnipArt /></Snip>
    <Tray>
      <TrayCell $w={34}><Chev up w={12} h={6} color="#fff" sw={1.8} /></TrayCell>
      <TrayCell $w={46}><svg width="22" height="18"><g transform="translate(0 1)"><path d="M4 6Q5 0 9.500 0q5 0 6 5z" fill="#8f8f8f" /><path d="M4 12q-4 0-4-4t4-4q3 0 5 3l8 5z" fill="#d7d7d7" /></g><circle cx="15" cy="12" r="5.500" fill="#fff" /><path d="M12 12q0-3 3-3 2 0 3 2M18 12q0 3-3 3-2 0-3-2" fill="none" stroke="#1570c8" strokeWidth="1.500" /></svg></TrayCell>
      <TrayCell $w={32}><Cloud top="#0f5fb8" low="#29a4ec" /></TrayCell>
      <TrayCell $w={66}>ENG<br />UK</TrayCell>
      <TrayCell $w={28}><svg width="20" height="15" fill="none" stroke="#fff" strokeWidth="1.400"><path d="M.5 5.500Q10-3.500 19.500 5.500M3.500 8.500q6.500-6 13 0M6.500 11.300q3.500-3 7 0" /><circle cx="10" cy="13" r="1.800" fill="#fff" stroke="none" /></svg></TrayCell>
      <TrayCell $w={30}><svg width="20" height="16" fill="none" stroke="#fff" strokeWidth="1.400"><path d="M1 5.500h3.500L9 1.500v13l-4.500-4H1zM11.500 5.500q2 2.500 0 5" /><path d="M14 3.500q3.800 4.500 0 9M16.500 1.500q5.300 6.500 0 13" stroke="#666" /></svg></TrayCell>
      <TrayCell $w={32}><svg width="20" height="13" fill="none" stroke="#fff" strokeWidth="1.600"><rect x=".8" y=".8" width="16.500" height="11.400" rx="2.500" /><path d="M3 3h3v7H3z" fill="#fff" stroke="none" /><path d="M19 4.500v4" strokeWidth="2" /></svg></TrayCell>
      <Clock>1:44 PM<br />4/11/2025</Clock>
    </Tray>
  </Taskbar>
);

export default function App() {
  return (
    <Screen>
      <Global />
      <BrowserChrome />
      <ConsoleHeader />
      <Body>
        <SideMenu />
        <BucketPage />
        <RightEdge />
      </Body>
      <WinTaskbar />
      <Watermark>Activate Windows<small>Go to Settings to activate Windows.</small></Watermark>
    </Screen>
  );
}
